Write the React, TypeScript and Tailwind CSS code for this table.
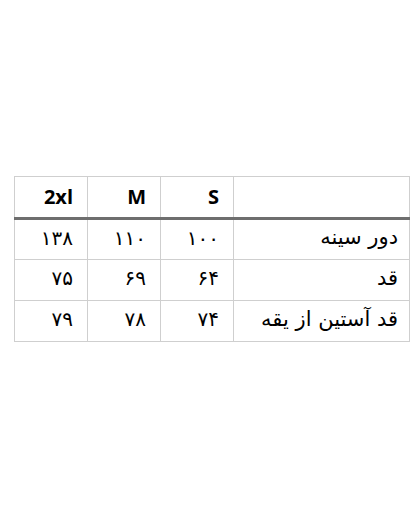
const rows = [
  { label: 'دور سینه', s: '۱۰۰', m: '۱۱۰', xl: '۱۳۸' },
  { label: 'قد', s: '۶۴', m: '۶۹', xl: '۷۵' },
  { label: 'قد آستین از یقه', s: '۷۴', m: '۷۸', xl: '۷۹' },
];

const fa = { fontFamily: '"DejaVu Sans", "Noto Sans", sans-serif' };

export default function App() {
  return (
    <div className="w-[420px] h-[525px] bg-white pt-[176px] pl-[14px]">
      <table dir="rtl" className="w-[395px] border-collapse table-fixed text-black">
        <colgroup>
          <col className="w-[176px]" />
          <col className="w-[73px]" />
          <col className="w-[73px]" />
          <col className="w-[73px]" />
        </colgroup>
        <thead>
          <tr className="h-[42px]">
            <th className="border border-[#cfcfcf] border-b-[#6e6e6e] border-b-[3px]" />
            {['S', 'M', '2xl'].map((h) => (
              <th
                key={h}
                className="border border-[#cfcfcf] border-b-[#6e6e6e] border-b-[3px] text-right pr-[14px] text-[20px] font-bold"
                style={{ fontFamily: '"Open Sans", sans-serif' }}
              >
                {h}
              </th>
            ))}
          </tr>
        </thead>
        <tbody>
          {rows.map((r) => (
            <tr key={r.label} className="h-[41px]">
              <td className="border border-[#cfcfcf] text-right pr-[11px] pb-[3px] text-[21px]" style={fa}>
                {r.label}
              </td>
              {[r.s, r.m, r.xl].map((v, i) => (
                <td key={i} className="border border-[#cfcfcf] text-right pr-[14px] pb-[4px] text-[20px]" style={fa}>
                  {v}
                </td>
              ))}
            </tr>
          ))}
        </tbody>
      </table>
    </div>
  );
}
